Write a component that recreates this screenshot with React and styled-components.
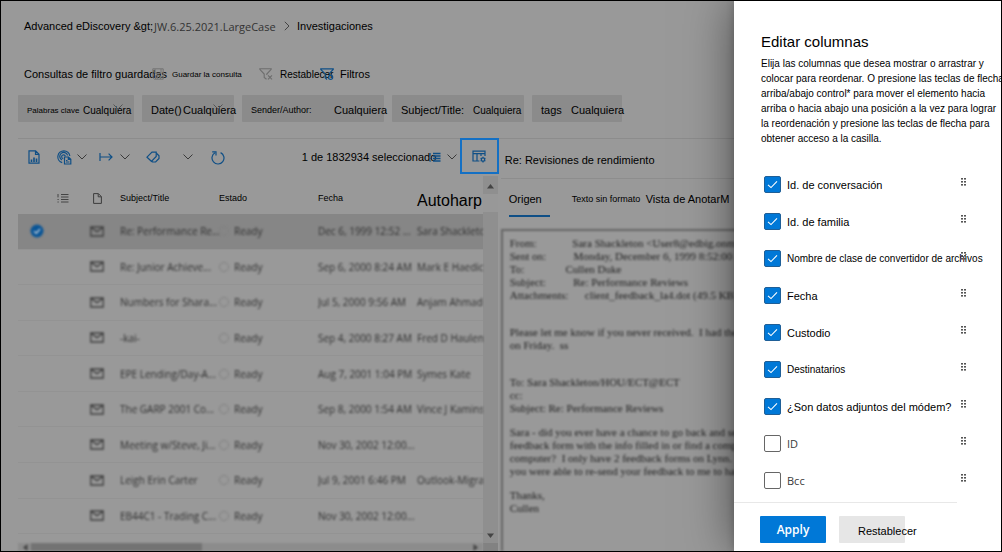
import React, { useState } from "react";
import styled, { createGlobalStyle, css } from "styled-components";

const sans = '"Liberation Sans", Arial, sans-serif';
const ui = '"Open Sans", "Noto Sans", sans-serif';
const blue = "#0f4f86";

const GlobalStyle = createGlobalStyle`
  *, *::before, *::after { box-sizing: border-box; }
  body { margin: 0; background: #999; font-family: ${sans}; font-size: 11px; color: #000; }
  button { font: inherit; color: inherit; background: none; border: 0; padding: 0; margin: 0; cursor: pointer; }
  a { color: inherit; text-decoration: none; }
  h1, h2, p, ul, ol { margin: 0; padding: 0; font-weight: 400; list-style: none; }
`;

const Frame = styled.div`
  display: grid;
  grid-template-columns: minmax(0, 1fr) 267px;
  min-height: 100vh;
  border: 1px solid #000;
`;

const Main = styled.main`
  display: flex;
  flex-direction: column;
  min-width: 0;
  overflow: hidden;
  padding: 15px 0 0 17px;
  background: #999;
`;

const Label = styled.span`
  flex: none;
  width: ${(p) => (p.$w ? `${p.$w}px` : "auto")};
  font-size: ${(p) => p.$size || 11}px;
  white-space: nowrap;
`;

const Crumbs = styled.ol`
  display: flex;
  align-items: center;
  height: 20px;
  padding-left: 6px;
`;

const Crumb = styled.li`
  flex: none;
  display: flex;
  align-items: center;
  gap: 8px;
  width: ${(p) => (p.$w ? `${p.$w}px` : "auto")};
  white-space: nowrap;
  ${(p) => p.$soft && css`font-family: ${ui}; color: #333;`}
`;

const QueryBar = styled.div`
  display: flex;
  align-items: center;
  height: 20px;
  margin-top: 28px;
  padding-left: 6px;
`;

const QueryButton = styled.button`
  flex: none;
  display: flex;
  align-items: center;
  gap: ${(p) => p.$gap || 8}px;
  width: ${(p) => (p.$w ? `${p.$w}px` : "auto")};
  font-size: ${(p) => p.$size || 11}px;
  white-space: nowrap;
  svg { flex: none; }
`;

const Chips = styled.div`
  display: flex;
  gap: 8px;
  margin-top: 11px;
`;

const Chip = styled.button`
  position: relative;
  flex: none;
  display: flex;
  align-items: center;
  width: ${(p) => p.$w}px;
  height: 27px;
  padding: 3px 0 0 9px;
  background: #8b8b8b;
  border-radius: 1px;
  text-align: left;
`;

const ChipMark = styled.span`
  position: absolute;
  right: 11px;
  top: 9px;
  display: flex;
`;

const Panes = styled.div`
  flex: 1;
  display: grid;
  grid-template-columns: minmax(0, 67fr) minmax(0, 33fr);
  margin-top: 16px;
  border-top: 1px solid #8c8c8c;
`;

const ListPane = styled.section`
  display: flex;
  flex-direction: column;
  min-width: 0;
`;

const Toolbar = styled.div`
  display: flex;
  align-items: center;
  height: 38px;
  margin-top: -1px;
  padding-left: 10px;
`;

const Tool = styled.button`
  flex: none;
  display: flex;
  align-items: center;
  gap: ${(p) => p.$gap || 7}px;
  width: ${(p) => p.$w}px;
  color: ${blue};
  svg { flex: none; }
`;

const Count = styled.span`
  flex: none;
  width: 127px;
  margin-left: auto;
  white-space: nowrap;
`;

const ColumnButton = styled.button`
  flex: none;
  display: flex;
  align-items: center;
  justify-content: center;
  align-self: flex-start;
  width: 39px;
  height: 36px;
  margin-right: -1px;
  border: 2px solid #1470c4;
`;

const ListBody = styled.div`
  flex: 1;
  display: grid;
  grid-template-columns: minmax(0, 1fr) 15px;
  grid-template-rows: minmax(0, 1fr) 8px;
`;

const Table = styled.table`
  display: flex;
  flex-direction: column;
  min-width: 0;
  padding-bottom: 9px;
`;

const Tr = styled.tr`
  display: grid;
  grid-template-columns: 34px 36px 32px 99px 99px 99px minmax(0, 1fr);
  align-items: center;
`;

const HeadRow = styled(Tr)`
  height: 38px;
  padding-top: 6px;
`;

const Th = styled.th`
  padding: 0 ${(p) => (p.$icon ? 14 : 0)}px 0 0;
  font-weight: 400;
  font-size: ${(p) => p.$size || 9}px;
  text-align: ${(p) => (p.$icon ? "center" : "left")};
  white-space: nowrap;
  svg { display: block; margin: 0 auto; }
  ${(p) => p.$size && css`padding-top: 6px;`}
`;

const Body = styled.tbody`
  flex: 1;
  display: flex;
  flex-direction: column;
`;

const Row = styled(Tr)`
  flex: 1;
  min-height: 32px;
  font-family: ${ui};
  font-size: 10px;
  color: #303030;
  border-bottom: 1px solid #939393;
  background: ${(p) => (p.$on ? "#868686" : "transparent")};
`;

const Td = styled.td`
  display: flex;
  align-items: center;
  gap: 5px;
  padding: 0 0 0 ${(p) => p.$left || 0}px;
  white-space: nowrap;
  overflow: hidden;
  filter: blur(1px);
`;

const Dot = styled.span`
  width: 10px;
  height: 10px;
  border: 1px solid #808080;
  border-radius: 50%;
`;

const ScrollY = styled.div`
  display: flex;
  flex-direction: column;
  align-items: center;
  background: #8f8f8f;
  color: #444;
`;

const ScrollArrow = styled.div`
  display: flex;
  align-items: center;
  justify-content: center;
  width: 15px;
  height: 16px;
  margin-top: 2px;
`;

const ScrollThumb = styled.div`
  width: 15px;
  height: 18px;
  margin-bottom: auto;
  background: #989898;
`;

const ScrollX = styled.div`
  display: flex;
  align-items: center;
  justify-content: space-between;
  padding: 0 5px;
  background: linear-gradient(#737373, #737373) 13px 0 / 171px 100% no-repeat #8c8c8c;
  filter: blur(1px);
`;

const Corner = styled.div`
  background: #828282;
`;

const Preview = styled.section`
  display: flex;
  flex-direction: column;
  min-width: 0;
  padding-left: 3px;
`;

const PreviewTitle = styled.h2`
  height: 40px;
  padding-left: 4px;
  font-size: 11px;
  line-height: 42px;
  white-space: nowrap;
  border-bottom: 1px solid #8d8d8d;
`;

const Tabs = styled.div`
  display: flex;
  height: 50px;
  padding: 4px 0 12px 8px;
`;

const Tab = styled.button`
  flex: none;
  width: ${(p) => (p.$w ? `${p.$w}px` : "auto")};
  margin-right: ${(p) => p.$after || 0}px;
  font-size: ${(p) => p.$size || 11}px;
  text-align: left;
  white-space: nowrap;
  border-bottom: 2px solid ${(p) => (p.$on ? blue : "transparent")};
`;

const Mail = styled.article`
  flex: 1;
  display: flex;
  flex-direction: column;
  margin-right: -8px;
  padding: 6px 0 0 7px;
  border: solid #666;
  border-width: 2px 0 0 2px;
  color: #222;
  font-family: "Liberation Serif", "Times New Roman", serif;
  font-size: 11px;
  line-height: 13px;
  white-space: pre;
  filter: blur(1px);
`;

const MailBlock = styled.p`
  margin-bottom: ${(p) => p.$after || 0}px;
`;

const Panel = styled.aside`
  position: relative;
  z-index: 1;
  display: flex;
  flex-direction: column;
  min-width: 0;
  padding: 30px 0 8px 27px;
  background: #fff;
  box-shadow: 0 0 46px rgba(0, 0, 0, 0.5), 0 0 8px rgba(0, 0, 0, 0.2);
  clip-path: inset(0 0 0 -70px);
`;

const PanelTitle = styled.h1`
  font-size: 15px;
  line-height: 22px;
`;

const Intro = styled.p`
  margin-top: 3px;
  font-size: 10px;
  line-height: 15px;
  white-space: nowrap;
`;

const Options = styled.ul`
  margin-top: 20px;
  padding-left: 3px;
`;

const Option = styled.li`
  display: flex;
  align-items: center;
  height: 37px;
`;

const OptionLabel = styled.label`
  flex: none;
  display: flex;
  align-items: center;
  gap: 6px;
  width: 197px;
  font-size: ${(p) => p.$size || 11}px;
  line-height: 14px;
  white-space: nowrap;
  ${(p) => p.$soft && css`font-family: ${ui}; color: #3a3a3a;`}
`;

const Check = styled.input`
  appearance: none;
  flex: none;
  width: 17px;
  height: 17px;
  margin: 0;
  border: 1px solid #666;
  border-radius: 2px;
  background: #fff;
  &:checked {
    border-color: #1f5f97;
    background: #0078d7
      url("data:image/svg+xml,%3Csvg xmlns='http://www.w3.org/2000/svg' viewBox='0 0 15 15'%3E%3Cpath d='M3 7.8 6 10.6 12 4.4' fill='none' stroke='white' stroke-width='1.1'/%3E%3C/svg%3E")
      center / 15px no-repeat;
  }
`;

const Grip = styled.button`
  display: flex;
  padding-bottom: 5px;
  color: #555;
`;

const Footer = styled.div`
  display: flex;
  gap: 13px;
  margin: auto 44px 0 -27px;
  padding: 13px 0 0 26px;
  border-top: 1px solid #e8e8e8;
`;

const FooterButton = styled.button`
  flex: none;
  width: 66px;
  height: 27px;
  border-radius: 1px;
  white-space: nowrap;
  ${(p) =>
    p.$primary
      ? css`background: #0078d7; color: #fff; font: 600 12px ${ui};`
      : css`background: #e6e6e6; padding: 3px 0 0 19px; text-align: left;`}
`;

const Icon = ({ w = 14, h = 14, sw = 1, children, color = "currentColor" }) => (
  <svg width={w} height={h} viewBox={`0 0 ${w} ${h}`} fill="none" stroke={color} strokeWidth={sw} aria-hidden="true">
    {children}
  </svg>
);

const Chevron = ({ color = "#3a3a3a", w = 10 }) => (
  <Icon w={w} h={6} color={color}>
    <path d={`M.5 .5 ${w / 2} 5 ${w - 0.5} .5`} />
  </Icon>
);

const Report = () => (
  <Icon w={12} h={14} sw={1.2}>
    <path d="M1 .8h6.6L11 4.2v9H1zM7.5 1v3.4H11" />
    <path d="M3.5 12V9.5M6 12V7.5M8.5 12V8.5" strokeWidth="1.6" />
  </Icon>
);

const Radar = () => (
  <Icon w={15} h={15} sw={1.2}>
    <path d="M5.2 12.6A6 6 0 1 1 12.8 6M5 10a4 4 0 1 1 5.6-4.7" />
    <path d="M6.2 8.6A1.9 1.9 0 1 1 8.4 6.4" />
    <path d="M7.5 7h4l2.3 2.3V14H7.5zM11.3 7v2.5h2.5M9 12h3.4M9 10.5h1.5" />
  </Icon>
);

const Extent = () => (
  <Icon w={14} h={10} sw={1.2}>
    <path d="M1 1v8M1 5h12M9.6 1.6 13 5 9.6 8.4" />
  </Icon>
);

const Tags = () => (
  <Icon w={14} h={12} sw={1.2}>
    <path d="M1 6.2 6 1.2h4.2v4.2L5.4 10.3z" />
    <path d="M10.4 2.3 13 4.8v2.6L9.6 11H6.5l-1-1" />
  </Icon>
);

const Refresh = () => (
  <Icon w={14} h={15} sw={1.2}>
    <path d="M9.6 2.6A6 6 0 1 1 4 2.8" />
    <path d="M1.2 1.8H5v3.7" />
  </Icon>
);

const Lines = ({ color, sw = 1 }) => (
  <Icon w={12} h={11} color={color} sw={sw}>
    <path d="M4 1.5h7.5M4 4h7.5M4 6.5h7.5M4 9h7.5M1 1v3.4M.5 6.5h1.2M.5 9h1.2" />
  </Icon>
);

const ColumnGear = () => (
  <Icon w={14} h={13} sw={1.2} color={blue}>
    <path d="M7.4 11H1V1.2h12V6M1 3.6h12M5 3.6V11M9 3.6V6" />
    <circle cx="11" cy="9.6" r="1.7" />
    <path d="M11 6.8v1M11 11.4v1M8.6 8.2l.9.5M12.5 10.5l.9.5M8.6 11l.9-.5M12.5 8.7l.9-.5" />
  </Icon>
);

const Save = () => (
  <Icon w={12} h={12} color="#737373">
    <path d="M.8.8h10.4v10.4H2.5L.8 9.5zM3 1v4.2h6V1M3.5 11V7.8h5V11M5.3 8v3" />
  </Icon>
);

const FunnelX = () => (
  <Icon w={14} h={12} color="#6e6e6e" sw={1.1}>
    <path d="M7.5 11.2 5.2 9.4V6L.8 1.4V.7h11.4v.7L7.8 6v1M9 7.4l4 4M13 7.4l-4 4" />
  </Icon>
);

const FunnelDot = () => (
  <Icon w={14} h={13} color={blue} sw={1.2}>
    <path d="M7 11.5 5.2 9.8V6L.8 1.5V.8h12.4v.7L9 5.8" />
    <circle cx="10.6" cy="9.3" r="2.1" />
  </Icon>
);

const Page = () => (
  <Icon w={9} h={11} color="#3d3d3d">
    <path d="M.6.6h4.8l3 3v6.8H.6zM5.2.8v3h3" />
  </Icon>
);

const Envelope = () => (
  <Icon w={14} h={11} sw={1.3} color="#404040">
    <path d="M.8 1h12.4v9H.8zM.8 1.2 7 5.6l6.2-4.4" />
  </Icon>
);

const Selected = () => (
  <Icon w={14} h={14} color="#b8c8d8" sw={1.4}>
    <circle cx="7" cy="7" r="6.5" fill="#0a5596" stroke="none" />
    <path d="M4 7.2 6.3 9.3 10 5" />
  </Icon>
);

const Triangle = ({ d, w = 7, h = 5 }) => (
  <svg width={w} height={h} viewBox={`0 0 ${w} ${h}`} fill="#444" aria-hidden="true"><path d={d} /></svg>
);

const Dots = () => (
  <svg width="6" height="8" viewBox="0 0 6 8" fill="currentColor" aria-hidden="true">
    {[0, 3, 6].map((y) => [0, 3].map((x) => <rect key={`${x}${y}`} x={x} y={y} width="2" height="1.6" />))}
  </svg>
);

const chips = [
  { w: 116, name: "Palabras clave", nameW: 56, nameSize: 8, size: 10, mark: true },
  { w: 92, name: "Date()", nameW: 32, mark: true },
  { w: 142, name: "Sender/Author:", nameW: 83, nameSize: 9 },
  { w: 132, name: "Subject/Title:", nameW: 72, size: 10 },
  { w: 90, name: "tags", nameW: 30 },
];

const mails = [
  ["Re: Performance Re...", "Dec 6, 1999 12:52 ...", "Sara Shackleton"],
  ["Re: Junior Achieve...", "Sep 6, 2000 8:24 AM", "Mark E Haedicke"],
  ["Numbers for Shara...", "Jul 5, 2000 9:56 AM", "Anjam Ahmad"],
  ["-kai-", "Sep 4, 2000 8:27 AM", "Fred D Haulenbeek"],
  ["EPE Lending/Day-A...", "Aug 7, 2001 1:04 PM", "Symes Kate"],
  ["The GARP 2001 Co...", "Sep 8, 2000 1:54 AM", "Vince J Kaminski"],
  ["Meeting w/Steve, Ji...", "Nov 30, 2002 12:00...", ""],
  ["Leigh Erin Carter", "Jul 9, 2001 6:46 PM", "Outlook-Migration"],
  ["EB44C1 - Trading C...", "Nov 30, 2002 12:00...", ""],
];

const options = [
  { text: "Id. de conversación", on: true },
  { text: "Id. de familia", on: true },
  { text: "Nombre de clase de convertidor de archivos", on: true, size: 10 },
  { text: "Fecha", on: true },
  { text: "Custodio", on: true },
  { text: "Destinatarios", on: true, size: 10 },
  { text: "¿Son datos adjuntos del módem?", on: true },
  { text: "ID", soft: true },
  { text: "Bcc", soft: true },
];

const mailBlocks = [
  {
    after: 24,
    text:
      "From:             Sara Shackleton <User8@edbig.onmicrosoft.com>\n" +
      "Sent on:          Monday, December 6, 1999 8:52:00 AM\n" +
      "To:               Cullen Duke\n" +
      "Subject:          Re: Performance Reviews\n" +
      "Attachments:      client_feedback_la4.dot (49.5 KB)",
  },
  { after: 24, text: "Please let me know if you never received.  I had them\non Friday.  ss" },
  { after: 11, text: "To: Sara Shackleton/HOU/ECT@ECT\ncc:\nSubject: Re: Performance Reviews" },
  {
    after: 11,
    text:
      "Sara - did you ever have a chance to go back and see\n" +
      "feedback form with the info filled in or find a computer\n" +
      "computer?  I only have 2 feedback forms on Lynn.\n" +
      "you were able to re-send your feedback to me to have",
  },
  { text: "Thanks,\nCullen" },
];

const intro = [
  "Elija las columnas que desea mostrar o arrastrar y",
  "colocar para reordenar. O presione las teclas de flecha",
  "arriba/abajo control* para mover el elemento hacia",
  "arriba o hacia abajo una posición a la vez para lograr",
  "la reordenación y presione las teclas de flecha para",
  "obtener acceso a la casilla.",
];

export default function App() {
  const [checked, setChecked] = useState(options.map((o) => !!o.on));
  const toggle = (i) => setChecked((c) => c.map((v, n) => (n === i ? !v : v)));

  return (
    <>
      <GlobalStyle />
      <Frame>
        <Main>
          <nav>
            <Crumbs>
              <Crumb $w={130}><a href="#home">Advanced eDiscovery &amp;gt;</a></Crumb>
              <Crumb $w={143} $soft>
                <a href="#case">JW.6.25.2021.LargeCase</a>
                <Icon w={6} h={10} color="#444"><path d="M.8.8 5 5 .8 9.2" /></Icon>
              </Crumb>
              <Crumb><a href="#investigations">Investigaciones</a></Crumb>
            </Crumbs>
          </nav>

          <QueryBar>
            <Label $w={128}>Consultas de filtro guardadas</Label>
            <QueryButton $w={107} $size={8}><Save />Guardar la consulta</QueryButton>
            <QueryButton $w={61} $size={10} $gap={7}><FunnelX />Restablecer</QueryButton>
            <QueryButton $gap={6}><FunnelDot />Filtros</QueryButton>
          </QueryBar>

          <Chips>
            {chips.map((c) => (
              <Chip key={c.name} $w={c.w}>
                {c.mark && <ChipMark><Chevron color="#555" /></ChipMark>}
                <Label $w={c.nameW} $size={c.nameSize}>{c.name}</Label>
                <Label $size={c.size}>Cualquiera</Label>
              </Chip>
            ))}
          </Chips>

          <Panes>
            <ListPane>
              <Toolbar>
                <Tool $w={29} aria-label="Informe"><Report /></Tool>
                <Tool $w={42} $gap={5} aria-label="Analizar"><Radar /><Chevron /></Tool>
                <Tool $w={47} aria-label="Exportar"><Extent /><Chevron /></Tool>
                <Tool $w={65} $gap={23} aria-label="Etiquetas"><Tags /><Chevron /></Tool>
                <Tool $w={20} aria-label="Actualizar"><Refresh /></Tool>
                <Count>1 de 1832934 seleccionado</Count>
                <Tool $w={31} $gap={6} aria-label="Agrupar"><Lines sw={1.3} /><Chevron /></Tool>
                <ColumnButton aria-label="Editar columnas"><ColumnGear /></ColumnButton>
              </Toolbar>
              <ListBody>
                <Table>
                  <thead>
                    <HeadRow>
                      <Th aria-label="Seleccionar" />
                      <Th $icon aria-label="Agrupar"><Lines color="#444" /></Th>
                      <Th $icon aria-label="Tipo"><Page /></Th>
                      <Th>Subject/Title</Th>
                      <Th>Estado</Th>
                      <Th>Fecha</Th>
                      <Th $size={16}>Autoharp</Th>
                    </HeadRow>
                  </thead>
                  <Body>
                    {mails.map(([subject, date, author], i) => (
                      <Row key={subject} $on={i === 0}>
                        <Td $left={12}>{i === 0 && <Selected />}</Td>
                        <Td />
                        <Td $left={2}><Envelope /></Td>
                        <Td>{subject}</Td>
                        <Td><Dot />Ready</Td>
                        <Td>{date}</Td>
                        <Td>{author}</Td>
                      </Row>
                    ))}
                  </Body>
                </Table>
                <ScrollY>
                  <ScrollArrow><Triangle d="M0 4.5 3.5 0 7 4.5z" /></ScrollArrow>
                  <ScrollThumb />
                  <ScrollArrow><Triangle d="M0 .5h7L3.5 5z" /></ScrollArrow>
                </ScrollY>
                <ScrollX>
                  <Triangle w={5} h={7} d="M4.5 0v7L0 3.5z" />
                  <Triangle w={5} h={7} d="M.5 0v7L5 3.5z" />
                </ScrollX>
                <Corner />
              </ListBody>
            </ListPane>

            <Preview>
              <PreviewTitle>Re: Revisiones de rendimiento</PreviewTitle>
              <Tabs>
                <Tab $on $w={41} $after={22}>Origen</Tab>
                <Tab $w={74} $size={9}>Texto sin formato</Tab>
                <Tab>Vista de Anotar</Tab>
                <Tab>M</Tab>
              </Tabs>
              <Mail>
                {mailBlocks.map((b) => <MailBlock key={b.text} $after={b.after}>{b.text}</MailBlock>)}
              </Mail>
            </Preview>
          </Panes>
        </Main>

        <Panel>
          <PanelTitle>Editar columnas</PanelTitle>
          <Intro>
            {intro.map((line) => <React.Fragment key={line}>{line}<br /></React.Fragment>)}
          </Intro>
          <Options>
            {options.map((o, i) => (
              <Option key={o.text}>
                <OptionLabel $size={o.size} $soft={o.soft}>
                  <Check type="checkbox" checked={checked[i]} onChange={() => toggle(i)} />
                  <span>{o.text}</span>
                </OptionLabel>
                <Grip aria-label={`Mover ${o.text}`}><Dots /></Grip>
              </Option>
            ))}
          </Options>
          <Footer>
            <FooterButton $primary>Apply</FooterButton>
            <FooterButton>Restablecer</FooterButton>
          </Footer>
        </Panel>
      </Frame>
    </>
  );
}
